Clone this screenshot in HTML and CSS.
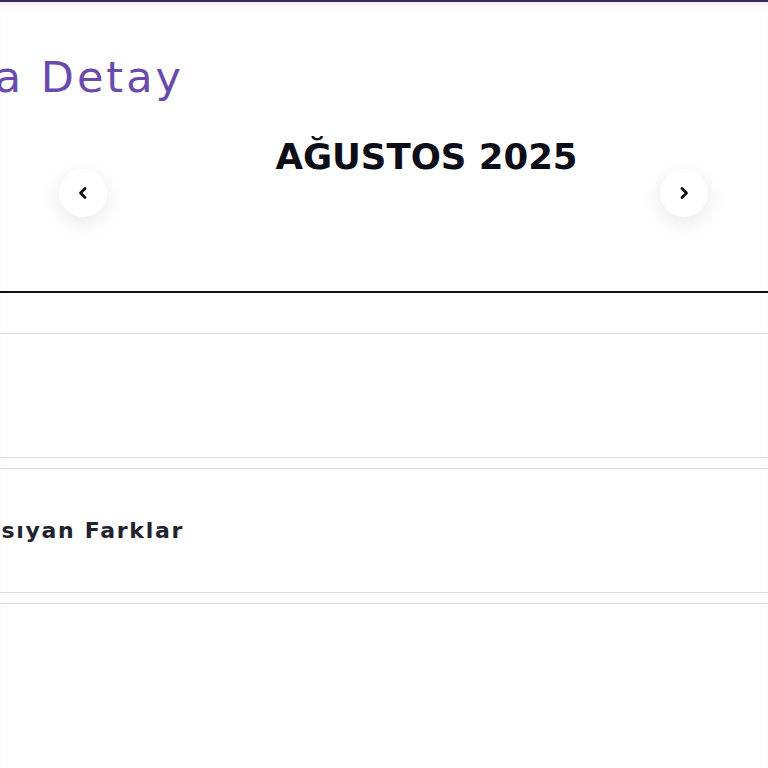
FILE: index.html
```html
<!DOCTYPE html>
<html lang="tr">
<head>
<meta charset="utf-8">
<link rel="stylesheet" href="styles.css">
</head>
<body>
<div class="page">
  <div class="title-wrap"><h1 class="title">Fatura Detay</h1></div>
  <div class="month-nav">
    <button class="nav-btn" aria-label="Önceki">
      <svg width="14" height="14" viewBox="0 0 14 14"><path d="M9 2.5 4.5 7 9 11.5" fill="none" stroke="#111" stroke-width="2.8" stroke-linecap="round" stroke-linejoin="round"/></svg>
    </button>
    <div class="month-center"><h2 class="month">AĞUSTOS 2025</h2></div>
    <button class="nav-btn" aria-label="Sonraki">
      <svg width="14" height="14" viewBox="0 0 14 14"><path d="M5 2.5 9.5 7 5 11.5" fill="none" stroke="#111" stroke-width="2.8" stroke-linecap="round" stroke-linejoin="round"/></svg>
    </button>
  </div>
  <div class="divider"></div>
  <ul class="list">
    <li class="item"></li>
    <li class="item"><div class="label-wrap"><span class="label">Yansıyan Farklar</span></div></li>
    <li class="item item-last"></li>
  </ul>
</div>
</body>
</html>
```
FILE: styles.css
```css
html, body {
  margin: 0;
  padding: 0;
  background: #fff;
  overflow: hidden;
}
body {
  width: 768px;
  height: 768px;
  font-family: "DejaVu Sans", "Noto Sans", sans-serif;
}
.page {
  border-top: 2px solid #3b2b57;
  box-shadow: inset 0 6px 8px -6px rgba(160, 90, 200, 0.25);
  height: 766px;
  overflow: hidden;
}
.title-wrap {
  width: 184px;
  display: flex;
  justify-content: flex-end;
  padding-top: 49px;
}
.title {
  margin: 0;
  white-space: nowrap;
  font-size: 43px;
  font-weight: 400;
  line-height: 53px;
  color: #6a4bad;
  letter-spacing: 3px;
}
.month-nav {
  display: flex;
  align-items: flex-start;
  padding: 33px 60px 0 59px;
  height: 134px;
  box-sizing: border-box;
}
.nav-btn {
  width: 48px;
  height: 48px;
  border-radius: 50%;
  border: none;
  background: #fff;
  box-shadow: 0 6px 22px rgba(0, 0, 0, 0.09);
  display: flex;
  align-items: center;
  justify-content: center;
  padding: 0;
  margin-top: 32px;
  flex: none;
}
.month-center {
  flex: 1;
  display: flex;
  justify-content: center;
  padding-left: 86px;
}
.month {
  margin: 0;
  font-size: 35.5px;
  font-weight: 700;
  line-height: 40px;
  color: #0d0d17;
  white-space: nowrap;
}
.divider {
  height: 2px;
  background: #111;
  margin-top: 53px;
}
.list {
  list-style: none;
  margin: 40px 0 0;
  padding: 0;
  display: flex;
  flex-direction: column;
  gap: 10px;
}
.item {
  height: 123px;
  border-top: 1px solid #dcdcdc;
  border-bottom: 1px solid #dcdcdc;
  display: flex;
  align-items: center;
}
.item-last {
  height: 150px;
  border-bottom: none;
}
.label-wrap {
  width: 184px;
  display: flex;
  justify-content: flex-end;
}
.label {
  white-space: nowrap;
  font-size: 22px;
  font-weight: 700;
  color: #23232f;
  letter-spacing: 1.7px;
}
```
